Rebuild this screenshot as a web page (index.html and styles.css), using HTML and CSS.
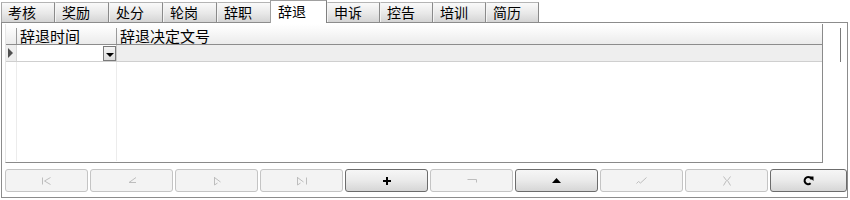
FILE: index.html
```html
<!DOCTYPE html>
<html>
<head>
<meta charset="utf-8">
<link rel="stylesheet" href="styles.css">
</head>
<body>
<div class="tabs">
  <div class="tab first">考核</div>
  <div class="tab">奖励</div>
  <div class="tab">处分</div>
  <div class="tab">轮岗</div>
  <div class="tab">辞职</div>
  <div class="tab active">辞退</div>
  <div class="tab">申诉</div>
  <div class="tab">控告</div>
  <div class="tab">培训</div>
  <div class="tab">简历</div>
</div>
<div class="panel">
  <div class="top">
    <div class="grid">
      <div class="ghead">
        <div class="hc ind"></div>
        <div class="hc c1">辞退时间</div>
        <div class="hc c2">辞退决定文号</div>
      </div>
      <div class="row">
        <div class="rc ind"><span class="arrow"></span></div>
        <div class="rc c1 edit"><span class="dd"><span class="ddtri"></span></span></div>
        <div class="rc c2"></div>
      </div>
      <div class="filler">
        <div class="fc ind"></div>
        <div class="fc c1"></div>
        <div class="fc c2"></div>
      </div>
    </div>
    <div class="side"><div class="sline"></div></div>
  </div>
  <div class="btns">
    <div class="btn off"><svg width="12" height="10" viewBox="0 0 12 10"><path d="M1.5 1.5v7M9.5 1.5L3.5 5l6 3.5" fill="none" stroke="#bdbdbd"/></svg></div>
    <div class="btn off"><svg width="12" height="10" viewBox="0 0 12 10"><path d="M10 1.5L3 6.5h7" fill="none" stroke="#bdbdbd"/></svg></div>
    <div class="btn off"><svg width="12" height="10" viewBox="0 0 12 10"><path d="M3.5 1v8M3.5 1.5l6 4.5M3.5 9l3-2" fill="none" stroke="#bdbdbd"/></svg></div>
    <div class="btn off"><svg width="12" height="10" viewBox="0 0 12 10"><path d="M1.5 1v8M1.5 1.5l6 4.5M10.5 1.5v7M1.5 9l3-2" fill="none" stroke="#bdbdbd"/></svg></div>
    <div class="btn on"><svg width="10" height="10" viewBox="0 0 10 10"><path d="M4 1h2v3h3v2H6v3H4V6H1V4h3z" fill="#000"/></svg></div>
    <div class="btn off"><svg width="12" height="8" viewBox="0 0 12 8"><path d="M1.5 2.5h9v3" fill="none" stroke="#bdbdbd"/></svg></div>
    <div class="btn on"><svg width="11" height="7" viewBox="0 0 11 7"><path d="M5.5 1L10 6H1z" fill="#000"/></svg></div>
    <div class="btn off"><svg width="14" height="10" viewBox="0 0 14 10"><path d="M1.5 7.5l2-2 2 1.5 6-5.5" fill="none" stroke="#bdbdbd"/></svg></div>
    <div class="btn off"><svg width="12" height="12" viewBox="0 0 12 12"><path d="M2.5 1.5l3 4-3 5M9.5 1.5l-3 4 3 5" fill="none" stroke="#bdbdbd"/></svg></div>
    <div class="btn on last"><svg width="11" height="11" viewBox="0 0 11 11"><path d="M8.6 4.5A3.6 3.6 0 1 0 7.6 8.3" fill="none" stroke="#000" stroke-width="2"/><path d="M6 1.5h4.5v4.5z" fill="#000"/></svg></div>
  </div>
</div>
</body>
</html>
```
FILE: styles.css
```css
* { box-sizing: border-box; }
html, body { margin: 0; padding: 0; background: #fff; }
body {
  width: 850px;
  height: 200px;
  overflow: hidden;
  font-family: "Noto Sans CJK SC", "Noto Sans", sans-serif;
  color: #000;
}
.tabs {
  display: flex;
  align-items: flex-end;
  height: 22px;
  padding-left: 1px;
}
.tab {
  width: 54px;
  height: 20px;
  font-size: 14px;
  line-height: 18px;
  padding-left: 6px;
  background: linear-gradient(to bottom, #fafafa 0%, #e8e8e8 55%, #d4d4d4 100%);
  border-top: 1px solid #b4b4b4;
  border-left: 1px solid #f4f4f4;
  border-right: 1px solid #8a8a8a;
}
.tab.first { border-left-color: #a8a8a8; }
.tab.active {
  width: 57px;
  height: 23px;
  margin-left: -1px;
  margin-bottom: -1px;
  padding-left: 7px;
  line-height: 20px;
  background: #fff;
  border-top: 1px solid #a0a0a0;
  border-left: 1px solid #a0a0a0;
  border-right: 1px solid #808080;
  position: relative;
  z-index: 1;
}
.tab.active ~ .tab { width: 53px; }
.panel {
  margin-left: 1px;
  width: 847px;
  height: 176px;
  border: 1px solid #8c8c8c;
  padding: 1px 0 5px 3px;
}
.top { display: flex; }
.grid {
  width: 818px;
  height: 139px;
  border-left: 1px solid #e6e6e6;
  border-right: 1px solid #8a8a8a;
  border-bottom: 1px solid #8a8a8a;
  display: flex;
  flex-direction: column;
}
.ghead {
  display: flex;
  padding-top: 4px;
  background: linear-gradient(to bottom, #ffffff 0%, #f8f8f8 40%, #ebebeb 100%);
  border-bottom: 1px solid #8c8c8c;
}
.hc {
  height: 16px;
  font-size: 15px;
  line-height: 16px;
  padding-left: 3px;
  border-right: 1px solid #9a9a9a;
  white-space: nowrap;
}
.ind { width: 11px; flex: none; }
.c1 { width: 100px; flex: none; }
.c2 { flex: 1; border-right: none; }
.row {
  display: flex;
  height: 17px;
  background: #eeeeee;
  border-bottom: 1px solid #cfcfcf;
}
.rc { height: 16px; border-right: 1px solid #d6d6d6; }
.rc.c2 { border-right: none; }
.rc.ind { display: flex; align-items: center; padding-left: 2px; }
.arrow {
  width: 0; height: 0;
  border-top: 5px solid transparent;
  border-bottom: 5px solid transparent;
  border-left: 5px solid #505050;
}
.edit {
  background: #fff;
  display: flex;
  justify-content: flex-end;
  border-right: 1px solid #c8c8c8;
}
.dd {
  width: 13px;
  height: 15px;
  margin-top: 1px;
  border: 1px solid #7a7a7a;
  background: linear-gradient(#f4f4f4, #dcdcdc);
  display: flex;
  align-items: center;
  justify-content: center;
}
.ddtri {
  width: 0; height: 0;
  border-left: 4px solid transparent;
  border-right: 4px solid transparent;
  border-top: 4px solid #000;
  margin-top: 2px;
}
.filler { display: flex; flex: 1; padding-bottom: 1px; }
.fc { border-right: 1px solid #ececec; }
.fc.c2 { border-right: none; }
.side { width: 24px; }
.sline {
  margin-left: 17px;
  margin-top: 4px;
  width: 1px;
  height: 34px;
  background: #7a7a7a;
}
.btns {
  display: flex;
  gap: 2px;
  margin-top: 6px;
}
.btn {
  width: 83px;
  height: 23px;
  border-radius: 3px;
  display: flex;
  align-items: center;
  justify-content: center;
}
.btn.last { flex: 1; width: auto; }
.btn.off {
  background: #f3f3f3;
  border: 1px solid #c4c4c4;
}
.btn.on {
  background: linear-gradient(to bottom, #f6f6f6 0%, #ececec 45%, #d6d6d6 100%);
  border: 1px solid #6c6c6c;
}
```
